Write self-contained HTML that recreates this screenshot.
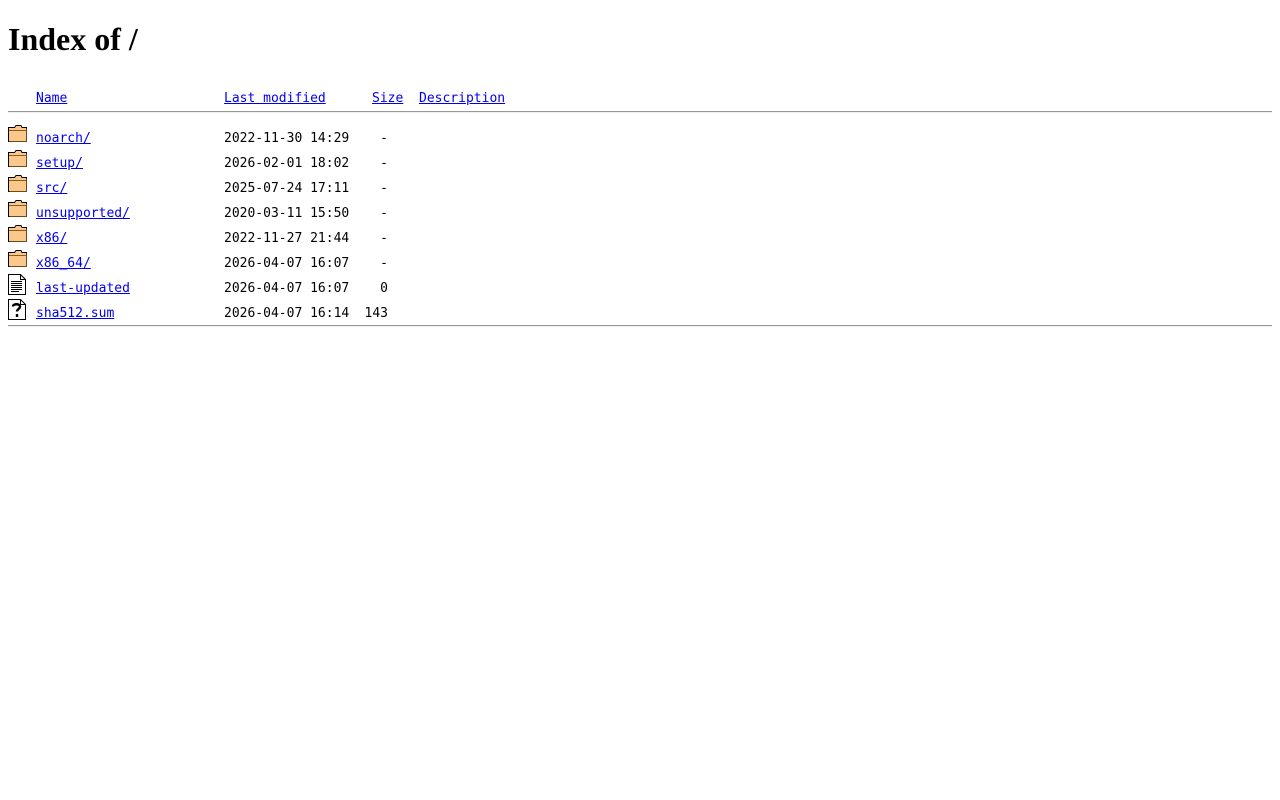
<!DOCTYPE html>
<html><head><style>
body{margin:0;background:#fff;font-family:"DejaVu Sans Mono",monospace;font-size:13px;color:#000}
h1{position:absolute;left:8px;top:21px;margin:0;font:bold 32px "Liberation Serif",serif;line-height:37px}
.t{position:absolute;white-space:pre;line-height:15px}
a{color:#00e}
.hr{position:absolute;left:8px;width:1264px;height:0;border-top:1px solid #999;border-bottom:1px solid #eee}
svg{position:absolute}
</style></head><body>
<h1>Index of /</h1>
<div class="t" style="left:36px;top:91px"><a href="#">Name</a></div>
<div class="t" style="left:224px;top:91px"><a href="#">Last modified</a></div>
<div class="t" style="left:372px;top:91px"><a href="#">Size</a></div>
<div class="t" style="left:419px;top:91px"><a href="#">Description</a></div>
<div class="hr" style="top:111px"></div>
<div id="rows"></div>
<div class="hr" style="top:325px"></div>
<script>
var d=[["noarch/","2022-11-30 14:29","-",0],["setup/","2026-02-01 18:02","-",0],["src/","2025-07-24 17:11","-",0],["unsupported/","2020-03-11 15:50","-",0],["x86/","2022-11-27 21:44","-",0],["x86_64/","2026-04-07 16:07","-",0],["last-updated","2026-04-07 16:07","0",1],["sha512.sum","2026-04-07 16:14","143",2]];
var folder='<path d="M0.5 3.5h6l1.5-2h5l1 2h4.5v14h-18z" fill="#f9c88a" stroke="#000"/><path d="M1 6.5h17" stroke="#8a5a20"/><path d="M1.5 17.5h17v-13" stroke="#6b4a22" fill="none"/>';
var txt='<path d="M0.5 0.5h12l5 5v15h-17z" fill="#fff" stroke="#000"/><path d="M12.5 0.5v5h5" fill="none" stroke="#000"/><path d="M3 7.5h11M3 9.5h11M3 11.5h11M3 13.5h11M3 15.5h11M3 17.5h8" stroke="#000"/>';
var unk='<path d="M0.5 0.5h12l5 5v15h-17z" fill="#fff" stroke="#000"/><path d="M12.5 0.5v5h5" fill="none" stroke="#000"/><path d="M5 7.5c0-3 7-3 7 0 0 2.5-3 2.5-3 5M9 15v3" fill="none" stroke="#000" stroke-width="2.4"/>';
var h='';
d.forEach(function(r,i){var y=131+25*i;
h+='<svg style="left:8px;top:'+(y-7)+'px" width="20" height="22" viewBox="0 0 20 22">'+[folder,txt,unk][r[3]]+'</svg>';
h+='<div class="t" style="left:36px;top:'+y+'px"><a href="#">'+r[0]+'</a></div>';
h+='<div class="t" style="left:224px;top:'+y+'px">'+r[1]+'</div>';
h+='<div class="t" style="left:340px;width:48px;text-align:right;top:'+y+'px">'+r[2]+'</div>';});
document.getElementById('rows').innerHTML=h;
</script>
</body></html>
